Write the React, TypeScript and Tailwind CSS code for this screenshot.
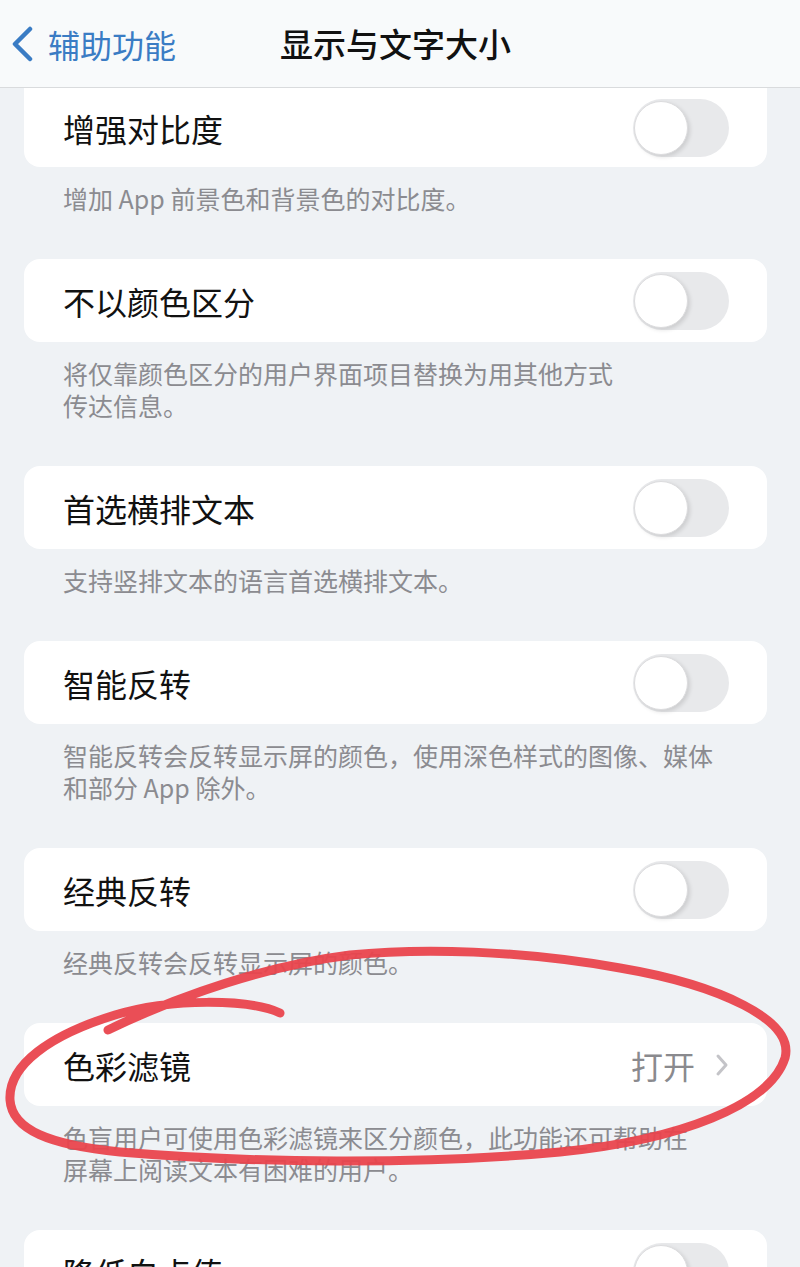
import React from "react";

const font = { fontFamily: '"Noto Sans CJK SC", "Noto Sans", sans-serif' };

function Toggle() {
  return (
    <div className="relative h-[58px] w-[96px] shrink-0 rounded-full bg-[#e8e9eb]">
      <div className="absolute left-[1px] top-[2px] h-[54px] w-[54px] rounded-full border border-[#dcdcde] bg-white shadow-[2px_2px_4px_rgba(0,0,0,0.12)]" />
    </div>
  );
}

function Card({ label, first, right }: { label: string; first?: boolean; right?: React.ReactNode }) {
  return (
    <div
      className={`mr-[33px] ml-[24px] flex items-center justify-between bg-white pl-[39px] pr-[38px] ${
        first ? "h-[79px] rounded-b-[16px]" : "h-[83px] rounded-[16px]"
      }`}
    >
      <span className="text-[32px] leading-none text-[#111]">{label}</span>
      {right ?? <Toggle />}
    </div>
  );
}

function Desc({ lines }: { lines: string[] }) {
  return (
    <div className="pl-[63px] pr-[40px] pt-[15px] pb-[45px] text-[25px] leading-[32px] text-[#8b8b90]">
      {lines.map((l, i) => (
        <div key={i} className="whitespace-nowrap">
          {l}
        </div>
      ))}
    </div>
  );
}

export default function App() {
  return (
    <div className="relative h-[1267px] w-[800px] overflow-hidden bg-[#eff2f5]" style={font}>
      <div className="flex h-[88px] items-center border-b border-[#d9dbdd] bg-[#f8fafb]">
        <div className="flex w-[250px] items-center pl-[9px]">
          <svg width="26" height="36" viewBox="0 0 26 36" className="mr-[13px]">
            <path d="M21 3 L6 18 L21 33" fill="none" stroke="#3a7cc4" strokeWidth="4.5" strokeLinecap="round" strokeLinejoin="round" />
          </svg>
          <span className="text-[32px] leading-none text-[#3a7cc4]">辅助功能</span>
        </div>
        <span className="ml-[30px] text-[33px] font-medium leading-none text-[#111]">显示与文字大小</span>
      </div>

      <Card label="增强对比度" first />
      <Desc lines={["增加 App 前景色和背景色的对比度。"]} />
      <Card label="不以颜色区分" />
      <Desc lines={["将仅靠颜色区分的用户界面项目替换为用其他方式", "传达信息。"]} />
      <Card label="首选横排文本" />
      <Desc lines={["支持竖排文本的语言首选横排文本。"]} />
      <Card label="智能反转" />
      <Desc lines={["智能反转会反转显示屏的颜色，使用深色样式的图像、媒体", "和部分 App 除外。"]} />
      <Card label="经典反转" />
      <Desc lines={["经典反转会反转显示屏的颜色。"]} />
      <Card
        label="色彩滤镜"
        right={
          <div className="flex items-center">
            <span className="text-[32px] leading-none text-[#8a8a8e]">打开</span>
            <svg width="14" height="24" viewBox="0 0 14 24" className="ml-[20px]">
              <path d="M3 3 L11 12 L3 21" fill="none" stroke="#c4c4c8" strokeWidth="3" strokeLinecap="round" strokeLinejoin="round" />
            </svg>
          </div>
        }
      />
      <Desc lines={["色盲用户可使用色彩滤镜来区分颜色，此功能还可帮助在", "屏幕上阅读文本有困难的用户。"]} />
      <Card label="降低白点值" />

      <svg
        className="pointer-events-none absolute left-0 top-0"
        width="800"
        height="1267"
        viewBox="0 0 800 1267"
      >
        <path
          d="M 280 1013 C 250 999, 170 998, 115 1015 C 50 1035, 8 1065, 10 1100 C 12 1130, 50 1145, 120 1152 C 250 1163, 420 1165, 560 1152 C 680 1140, 770 1105, 785 1058 C 795 1020, 720 985, 620 968 C 520 950, 420 948, 350 955 C 270 965, 180 995, 108 1030"
          fill="none"
          stroke="#e9454d"
          strokeWidth="9"
          strokeLinecap="round"
          strokeLinejoin="round"
          opacity="0.95"
        />
      </svg>
    </div>
  );
}
